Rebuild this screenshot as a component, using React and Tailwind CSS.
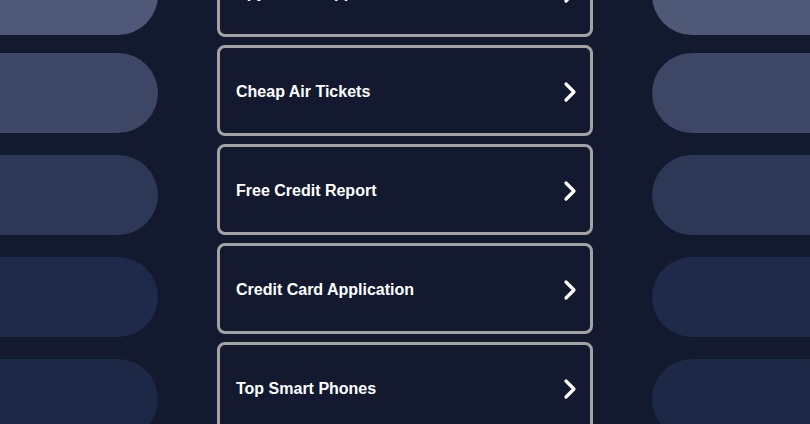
import React from 'react';

const links = [
  'Spy Phone Apps',
  'Cheap Air Tickets',
  'Free Credit Report',
  'Credit Card Application',
  'Top Smart Phones',
];

const pills = [
  { color: 'bg-[#4f5877]', gap: 'mb-[18px]' },
  { color: 'bg-[#3d4664]', gap: 'mb-[22px]' },
  { color: 'bg-[#2d3756]', gap: 'mb-[22px]' },
  { color: 'bg-[#1f2a4a]', gap: 'mb-[22px]' },
  { color: 'bg-[#1d2847]', gap: 'mb-[22px]' },
];

function Chevron() {
  return (
    <svg width="16" height="22" viewBox="0 0 16 22" fill="none" className="shrink-0">
      <polyline
        points="5,3 13,11 5,19"
        stroke="white"
        strokeWidth="3.2"
        strokeLinecap="round"
        strokeLinejoin="round"
      />
    </svg>
  );
}

function PillColumn({ side }) {
  return (
    <div className="w-[158px] shrink-0 flex flex-col -mt-[45px]">
      {pills.map((p, i) => (
        <div
          key={i}
          className={`h-20 shrink-0 w-full ${p.color} ${p.gap} ${
            side === 'left' ? 'rounded-r-full' : 'rounded-l-full'
          }`}
        />
      ))}
    </div>
  );
}

export default function App() {
  return (
    <div
      className="h-[424px] w-[810px] overflow-hidden bg-[#131a2f] flex justify-between"
      style={{ fontFamily: '"Liberation Sans", Arial, sans-serif' }}
    >
      <PillColumn side="left" />

      <div className="w-[376px] shrink-0 flex flex-col gap-[8px] -mt-[54px]">
        {links.map((label) => (
          <a
            key={label}
            href="#"
            className="h-[91px] shrink-0 flex items-center justify-between rounded-lg border-[3px] border-[#a3a3a3] bg-[#131a2f] pl-[16px] pr-[13px] pt-[2px]"
          >
            <span className="text-white font-bold text-[16px]">{label}</span>
            <Chevron />
          </a>
        ))}
      </div>

      <PillColumn side="right" />
    </div>
  );
}
